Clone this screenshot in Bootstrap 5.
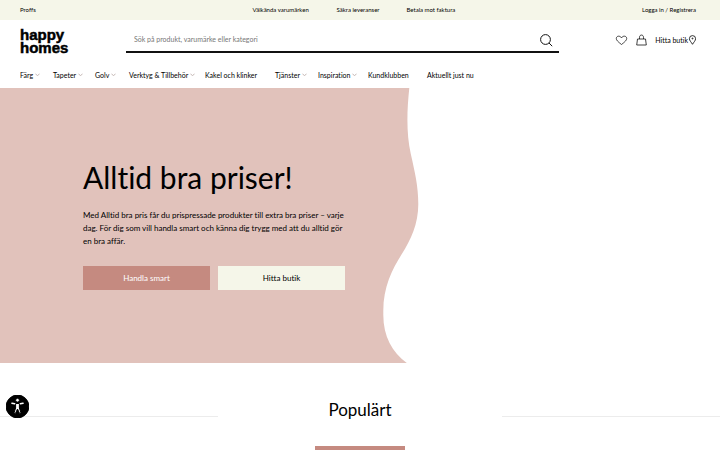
<!DOCTYPE html>
<html lang="sv">
<head>
<meta charset="utf-8">
<meta name="viewport" content="width=device-width, initial-scale=1">
<title>Happy Homes</title>
<link rel="stylesheet" href="https://cdn.jsdelivr.net/npm/bootstrap@5.3.0/dist/css/bootstrap.min.css">
<style>
body{font-family:Lato,sans-serif;font-size:7px;line-height:10px;color:#000;font-variant-ligatures:none}
a{color:inherit;text-decoration:none;white-space:nowrap}
svg{flex:none;fill:none;stroke:currentColor}
.site-gutter{padding-left:20px;padding-right:24px}
.usp-bar{background:#f5f6e9;height:20px;font-size:6px}
.usp-list{display:grid;grid-template-columns:84px 70px auto;margin-left:30px}
.main-row{height:42px;padding-top:8px}
.brand-logo{font:700 15px/13px "Liberation Sans",Arial,sans-serif;width:106px;-webkit-text-stroke:.5px #000}
.search-box{border-bottom:2px solid #111;height:25px;width:64%}
.search-box input{border:0;background:none;font-size:7px;padding:0 8px 2px;outline-offset:-1px}
.search-box input::placeholder{color:#777;opacity:1}
.search-box button{margin-right:5px}
.search-box button,.plain-btn{border:0;background:none;padding:0;color:#111}
.header-tools{padding-top:6px}
.menu-grid{height:26px;display:grid;grid-template-columns:33px 42px 34px 76px 70px 43px 50px 59px auto}
.menu-grid a{display:flex;align-items:center;gap:2px}
.menu-grid svg{color:#b5a5a2}
.hero{position:relative;height:275px}
.hero-shape{position:absolute;left:0;top:0;width:59%;height:100%;fill:#e1c2bb;stroke:none}
.hero-copy{position:relative;width:262px;margin-left:83px;padding-top:69px}
.hero-copy h1{font-size:30px;line-height:40px;font-weight:400;margin-bottom:12px;white-space:nowrap}
.hero-copy p{font-size:8px;line-height:13px;margin-bottom:18px;white-space:nowrap}
.cta{flex:1 1 0;height:24px;border-radius:0;border:0;padding:0;font-size:8px;line-height:24px}
.cta-rose,.cta-rose:hover{background:#c58a80;color:#fff}
.cta-cream,.cta-cream:hover{background:#f5f6e9;color:#000}
.rule{height:1px;background:#ececec;flex:0 0 218px;margin-top:12px}
.popular{padding-top:34px}
.popular h2{font-size:17px;line-height:26px;font-weight:400;margin:0}
.tab-strip{width:90px;height:32px;background:#c58a80;margin-top:23px}
.access-btn{position:fixed;left:6px;bottom:32px;width:23px;height:23px;border:0;padding:0;background:none;display:flex}
</style>
<script src="https://cdn.jsdelivr.net/npm/bootstrap@5.3.0/dist/js/bootstrap.bundle.min.js"></script>
</head>
<body class="bg-white vh-100 overflow-hidden">
<header>
<div class="usp-bar site-gutter d-flex align-items-center justify-content-between">
<a href="#">Proffs</a>
<div class="usp-list"><span>Välkända varumärken</span><span>Säkra leveranser</span><span>Betala mot faktura</span></div>
<a href="#">Logga in / Registrera</a>
</div>
<div class="main-row site-gutter d-flex align-items-start">
<a class="brand-logo" href="#" aria-label="happy homes">happy<br>homes</a>
<form class="search-box d-flex align-items-center" role="search">
<input class="flex-grow-1" type="search" aria-label="Sök" placeholder="Sök på produkt, varumärke eller kategori">
<button type="button" class="d-flex" aria-label="Sök"><svg width="16" height="16" viewBox="0 0 16 16"><circle cx="7.5" cy="7.5" r="4.9"/><path d="M11 11l3.200 3.200"/></svg></button>
</form>
<div class="header-tools ms-auto d-flex align-items-center">
<a href="#" class="me-2 d-flex" aria-label="Favoriter"><svg width="13" height="11" viewBox="0 0 13 11" stroke-width=".7"><path d="M6.5 9.500C3 6.800 1.300 5.200 1.300 3.500 1.300.9 4.800.2 6.500 2.800 8.200.2 11.700.9 11.700 3.500c0 1.700-1.700 3.300-5.200 6z"/></svg></a>
<button type="button" class="plain-btn me-2 d-flex" aria-label="Varukorg"><svg width="11" height="12" viewBox="0 0 11 12" stroke-width=".8"><path d="M1.500 5h8l.8 6H.7zM3.500 5V3.300c0-3 4-3 4 0V5"/></svg></button>
<a href="#" class="d-flex align-items-center">Hitta butik <svg width="8" height="10" viewBox="-1 0 8 10" stroke-width=".8"><path d="M3.500 9.300C2.300 7.300.4 5.500.4 3.700a3.100 3.100 0 0 1 6.200 0c0 1.800-1.900 3.600-3.100 5.600z"/><circle cx="3.500" cy="3.500" r=".5"/></svg></a>
</div>
</div>
<nav class="menu-grid site-gutter" aria-label="Huvudmeny">
<a href="#">Färg <svg width="5" height="4" viewBox="0 0 5 4" stroke-width=".8"><path d="M.5 1l2 1.500 2-1.500"/></svg></a>
<a href="#">Tapeter <svg width="5" height="4" viewBox="0 0 5 4" stroke-width=".8"><path d="M.5 1l2 1.500 2-1.500"/></svg></a>
<a href="#">Golv <svg width="5" height="4" viewBox="0 0 5 4" stroke-width=".8"><path d="M.5 1l2 1.500 2-1.500"/></svg></a>
<a href="#">Verktyg &amp; Tillbehör <svg width="5" height="4" viewBox="0 0 5 4" stroke-width=".8"><path d="M.5 1l2 1.500 2-1.500"/></svg></a>
<a href="#">Kakel och klinker</a>
<a href="#">Tjänster <svg width="5" height="4" viewBox="0 0 5 4" stroke-width=".8"><path d="M.5 1l2 1.500 2-1.500"/></svg></a>
<a href="#">Inspiration <svg width="5" height="4" viewBox="0 0 5 4" stroke-width=".8"><path d="M.5 1l2 1.500 2-1.500"/></svg></a>
<a href="#">Kundklubben</a>
<a href="#">Aktuellt just nu</a>
</nav>
</header>
<main>
<section class="hero">
<svg class="hero-shape" viewBox="0 0 425 275" preserveAspectRatio="none" aria-hidden="true"><path d="M0 0H409.500C407 24 406.500 46 411 66C415 84 418.500 98 418.500 116C418.500 136 411 152 402 166C392 182 383 200 383.500 225C383 248 392 264 407 275H0z"/></svg>
<div class="hero-copy">
<h1>Alltid bra priser!</h1>
<p>Med Alltid bra pris får du prispressade produkter till extra bra priser – varje<br>dag. För dig som vill handla smart och känna dig trygg med att du alltid gör<br>en bra affär.</p>
<div class="d-flex gap-2"><a class="btn cta cta-rose" href="#">Handla smart</a><a class="btn cta cta-cream" href="#">Hitta butik</a></div>
</div>
</section>
<section class="popular">
<div class="d-flex align-items-center justify-content-between"><div class="rule"></div><h2>Populärt</h2><div class="rule"></div></div>
<div class="tab-strip mx-auto"></div>
</section>
</main>
<button type="button" class="access-btn" aria-label="Tillgänglighet"><svg width="23" height="23" viewBox="0 0 23 23" stroke="none"><circle cx="11.500" cy="11.500" r="11.400" fill="#000"/><circle cx="11.500" cy="5.200" r="1.900" fill="#fff"/><path d="M5.900 8.200C9.500 9 13.500 9 17.100 8.200" fill="none" stroke="#fff" stroke-width="1.500" stroke-linecap="round"/><path d="M9.600 8.500h3.800v4.500l1.700 5.200-1.400.5-2.200-4.700-2.200 4.700-1.400-.5L9.600 13z" fill="#fff"/></svg></button>
</body>
</html>
